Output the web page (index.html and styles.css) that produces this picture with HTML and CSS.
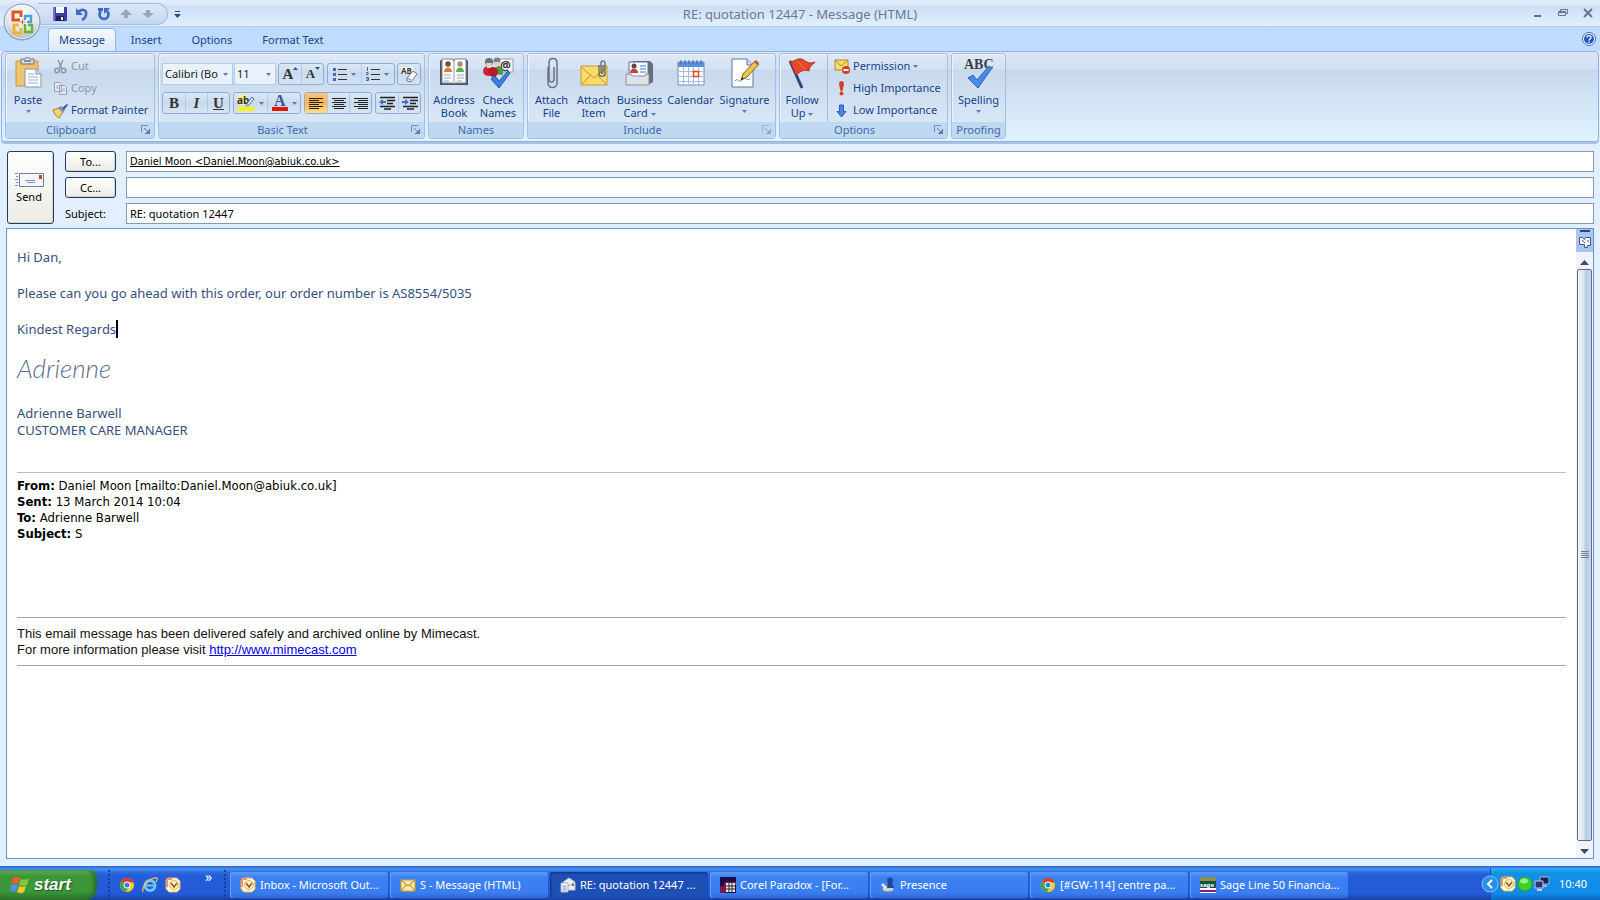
FILE: index.html
```html
<!DOCTYPE html>
<html lang="en">
<head>
  <meta charset="UTF-8">
  <title>RE: quotation 12447 - Message (HTML)</title>
  <link rel="stylesheet" href="styles.css">
</head>
<body>
  <!-- Shared icons -->
  <svg class="defs" width="0" height="0">
    <symbol id="outlook" viewBox="0 0 16 16">
      <path d="M3 1h9l3 3v8l-3 3H4l-3-3V3z" fill="#fff6df" stroke="#f0b765"/>
      <path d="M1 1h6v2H3v7H1z" fill="#ef9560"/>
      <circle cx="9" cy="8" r="4.500" fill="#ffeebc" stroke="#e5b357"/>
      <path d="M6 6l3 4 3-4" fill="none" stroke="#8a5a1c" stroke-width="1.400"/>
    </symbol>
    <symbol id="chrome" viewBox="0 0 16 16">
      <circle cx="8" cy="8" r="7" fill="#f7cf2f"/>
      <path d="M8 8L2 4.400A7 7 0 0 1 14.600 5.500H8z" fill="#dc3a2b"/>
      <path d="M8 8L2 4.400A7 7 0 0 0 7 15l3-5z" fill="#3fa64b"/>
      <circle cx="8" cy="8" r="3.400" fill="#fff"/>
      <circle cx="8" cy="8" r="2.500" fill="#3c7bd8"/>
    </symbol>
    <symbol id="launcher" viewBox="0 0 9 9">
      <path d="M.5 7V.5H7" fill="none" stroke="#6b8fc0"/>
      <path d="M3 3l4 4M8.500 4v4.500H4" fill="none" stroke="#5578ad"/>
      <path d="M5 8h3V5z" fill="#5578ad"/>
    </symbol>
    <symbol id="drop" viewBox="0 0 5 3">
      <path d="M0 0h5L2.500 3z" fill="#5a7bb0"/>
    </symbol>
  </svg>

  <div class="window">
    <header class="titlebar">
      <div class="quickAccess">
        <div class="pill">
          <button aria-label="Save"><svg width="14" height="14" viewBox="0 0 14 14"><path d="M0 0h14v14H1l-1-1z" fill="#3b3fa5"/><path d="M3 0h8v6H3z" fill="#f4f7ff"/><path d="M3 9h8v5H3z" fill="#20205c"/><path d="M8 10h2v3H8z" fill="#fff"/><path d="M0 0h2v13H0z" fill="#6d74d4"/></svg></button>
          <button aria-label="Undo"><svg width="14" height="14" viewBox="0 0 14 14"><path d="M3 5c5-4 9-2 8 3-.5 2-2 4-4 5" fill="none" stroke="#4469c0" stroke-width="2.600"/><path d="M1 1v7h7z" fill="#4469c0"/></svg></button>
          <button aria-label="Repeat"><svg width="14" height="14" viewBox="0 0 14 14"><path d="M10 4c3 3 1 8-3 8S1 7 4 4" fill="none" stroke="#3d6ac6" stroke-width="2.600"/><path d="M7 1h6L7 7zM1 1h5v3H1z" fill="#3d6ac6"/></svg></button>
          <button aria-label="Previous item"><svg width="12" height="10" viewBox="0 0 12 10"><path d="M6 0l6 6H8v3H4V6H0z" fill="#98a6bd"/></svg></button>
          <button aria-label="Next item"><svg width="12" height="10" viewBox="0 0 12 10"><path d="M6 9l6-5H8V1H4v3H0z" fill="#98a6bd"/></svg></button>
        </div>
        <button class="customize" aria-label="Customize toolbar"><svg width="7" height="7" viewBox="0 0 7 7"><path d="M1 0h5v1H1zM0 3h7L3.500 7z" fill="#2b4a86"/></svg></button>
      </div>
      <h1 class="title">RE: quotation 12447 - Message (HTML)</h1>
      <div class="windowButtons">
        <button aria-label="Minimize"><svg width="10" height="10" viewBox="0 0 10 10"><path d="M1 7h7v2H1z" fill="#5f6f8a"/></svg></button>
        <button aria-label="Restore"><svg width="10" height="10" viewBox="0 0 10 10"><path d="M2.500 3V1.500h7v4H8M.5 3.500h7v4h-7zM.5 4.500h7" fill="none" stroke="#66758f"/></svg></button>
        <button aria-label="Close"><svg width="10" height="10" viewBox="0 0 10 10"><path d="M1 1l8 8M9 1L1 9" stroke="#66758f" stroke-width="2"/></svg></button>
      </div>
      <button class="orb" aria-label="Office Button">
        <svg width="40" height="40" viewBox="0 0 40 40">
          <defs><radialGradient id="orbFill" cx=".5" cy=".3" r=".7"><stop offset="0" stop-color="#fff"/><stop offset=".6" stop-color="#e3e7ef"/><stop offset="1" stop-color="#a7b2c6"/></radialGradient></defs>
          <circle cx="20" cy="20" r="18" fill="url(#orbFill)" stroke="#8795b0"/>
          <circle cx="20" cy="20" r="16.500" fill="none" stroke="#fff" opacity=".7"/>
          <g fill="none" stroke-width="3">
            <path d="M18 18h-7V10h8v5" stroke="#e1521e"/>
            <path d="M23 18v-4h6v6h-4" stroke="#4aa0dc" stroke-width="2.400"/>
            <path d="M17 23h-5v8h7v-5" stroke="#f1b52a"/>
            <path d="M23 22v8h7v-7h-4" stroke="#67b32e" stroke-width="2.400"/>
          </g>
          <path d="M18 20h5M20.500 17.500v5" stroke="#d9682c"/>
        </svg>
      </button>
    </header>

    <nav class="tabs">
      <button class="tab active">Message</button>
      <button class="tab">Insert</button>
      <button class="tab">Options</button>
      <button class="tab">Format Text</button>
      <button class="help" aria-label="Help"><svg width="14" height="14" viewBox="0 0 14 14"><circle cx="7" cy="7" r="6.500" fill="#fff" stroke="#3a68b5"/><circle cx="7" cy="7" r="5" fill="#2456bd"/><path d="M5 5.500c0-2.500 4-2.500 4 0C9 7 7 7 7 8.500M7 9.500V11" fill="none" stroke="#fff" stroke-width="1.400"/></svg></button>
    </nav>

    <div class="ribbon">
      <section class="group clipboard">
        <div class="tools">
          <button class="big">
            <svg width="30" height="32" viewBox="0 0 30 32"><path d="M3 4h22v25H3z" fill="#efc46c" stroke="#c8973f"/><path d="M8 2h4c0-2 5-2 5 0h4v5H8z" fill="#d5d8de" stroke="#6f7580"/><path d="M11 4h7" stroke="#444"/><path d="M12 12h11l5 5v13H12z" fill="#f8fbff" stroke="#8795b5"/><path d="M23 12v5h5" fill="#cfdcf1" stroke="#8795b5"/><path d="M15 17h6M15 20h10M15 23h10M15 26h10" stroke="#9eb0cf"/></svg>
            <span>Paste</span><svg class="drop" width="5" height="3"><use href="#drop"/></svg>
          </button>
          <div class="stack">
            <button class="small off"><svg width="15" height="15" viewBox="0 0 15 15"><path d="M5 1l4 9M10 1L6 10" stroke="#8d97a8" stroke-width="1.500"/><circle cx="4" cy="11.500" r="2.300" fill="none" stroke="#8d97a8" stroke-width="1.500"/><circle cx="10.500" cy="11.500" r="2.300" fill="none" stroke="#8d97a8" stroke-width="1.500"/></svg>Cut</button>
            <button class="small off"><svg width="15" height="15" viewBox="0 0 15 15"><path d="M1.500 1.500h5l2 2v7h-7zM6.500 4.500h5l2 2v7h-7z" fill="#e5eaf2" stroke="#95a0b4"/><path d="M3 5h3M3 7h3M8 8h4M8 10h4" stroke="#a5afc0"/></svg>Copy</button>
            <button class="small"><svg width="15" height="15" viewBox="0 0 15 15"><path d="M0 7l6-2 4 4-4 6c-2-1-5-4-6-8z" fill="#f1d273" stroke="#a8822f"/><path d="M5 5l3-2 4 4-2 3z" fill="#8b8fa0"/><path d="M9 5l5-4 1 1-4 5z" fill="#3c56a5"/></svg>Format Painter</button>
          </div>
        </div>
        <h2 class="launch-pad">Clipboard<svg width="9" height="9"><use href="#launcher"/></svg></h2>
      </section>

      <section class="group basic">
        <div class="tools rows">
          <div class="row">
            <span class="selects">
              <span class="pick font"><select aria-label="Font"><option>Calibri (Bo</option></select><svg width="5" height="3"><use href="#drop"/></svg></span>
              <span class="pick size"><select aria-label="Font size"><option>11</option></select><svg width="5" height="3"><use href="#drop"/></svg></span>
            </span>
            <span class="set"><button class="letter grow">A<svg width="5" height="3" viewBox="0 0 5 3"><path d="M0 3h5L2.500 0z" fill="#2d4f91"/></svg></button><button class="letter shrink">A<svg width="5" height="3" viewBox="0 0 5 3"><path d="M0 0h5L2.500 3z" fill="#2d4f91"/></svg></button></span>
            <span class="set">
              <button class="wide" aria-label="Bullets"><svg width="14" height="14" viewBox="0 0 14 14"><path d="M0 1h3v3H0zM0 6h3v3H0zM0 11h3v3H0z" fill="#4566a8"/><path d="M5 2.500h9M5 7.500h9M5 12.500h9" stroke="#333"/></svg><svg width="5" height="3"><use href="#drop"/></svg></button>
              <button class="wide" aria-label="Numbering"><svg width="14" height="14" viewBox="0 0 14 14"><path d="M1.500 0v4M0 5.500h2v2H0M0 10.500h2.500v3H0M0 12h2" fill="none" stroke="#4566a8"/><path d="M5 2.500h9M5 7.500h9M5 12.500h9" stroke="#333"/></svg><svg width="5" height="3"><use href="#drop"/></svg></button>
            </span>
            <span class="set"><button aria-label="Clear formatting"><svg width="18" height="17" viewBox="0 0 18 17"><path d="M1 1h12v7H1z" fill="#fff"/><text x="1" y="8" font-size="8" font-weight="bold" fill="#333">AB</text><path d="M7 12l6-7 4 3-6 8-4-1z" fill="#f5f7fb" stroke="#6b7990"/><path d="M7 12l4 2" stroke="#6b7990"/></svg></button></span>
          </div>
          <div class="row">
            <span class="set"><button class="letter"><b>B</b></button><button class="letter"><i>I</i></button><button class="letter"><u>U</u></button></span>
            <span class="set">
              <button class="wide" aria-label="Highlight"><svg width="18" height="17" viewBox="0 0 18 17"><path d="M1 0h9v10H1z" fill="#f7f188"/><text x="0" y="9" font-size="10" font-weight="bold" fill="#333">ab</text><path d="M9 10l6-8 2 2-6 7z" fill="#dfe7f5" stroke="#596fa0"/><path d="M1 12h16v4H1z" fill="#fbf500"/></svg><svg width="5" height="3"><use href="#drop"/></svg></button>
              <button class="wide" aria-label="Font colour"><svg class="serif" width="16" height="17" viewBox="0 0 16 17"><text x="2" y="11" font-size="16" font-weight="bold" fill="#31559b">A</text><path d="M0 12h16v4H0z" fill="#e3120b"/></svg><svg width="5" height="3"><use href="#drop"/></svg></button>
            </span>
            <span class="set">
              <button class="on" aria-label="Align left"><svg width="14" height="13" viewBox="0 0 14 13"><path d="M0 1.500h14M0 3.500h10M0 5.500h14M0 7.500h10M0 9.500h14M0 11.500h10" stroke="#222"/></svg></button>
              <button aria-label="Centre"><svg width="14" height="13" viewBox="0 0 14 13"><path d="M0 1.500h14M2 3.500h10M0 5.500h14M2 7.500h10M0 9.500h14M2 11.500h10" stroke="#222"/></svg></button>
              <button aria-label="Align right"><svg width="14" height="13" viewBox="0 0 14 13"><path d="M0 1.500h14M4 3.500h10M0 5.500h14M4 7.500h10M0 9.500h14M4 11.500h10" stroke="#222"/></svg></button>
            </span>
            <span class="set">
              <button aria-label="Decrease indent"><svg width="16" height="14" viewBox="0 0 16 14"><path d="M1 1.500h15M8 4.500h8M8 7.500h6M1 10.500h15M5 13h7" stroke="#222" stroke-width="1.600"/><path d="M0 6l4-3v2h3v2H4v2z" fill="#3f72cc"/></svg></button>
              <button aria-label="Increase indent"><svg width="16" height="14" viewBox="0 0 16 14"><path d="M1 1.500h15M8 4.500h8M8 7.500h6M1 10.500h15M5 13h7" stroke="#222" stroke-width="1.600"/><path d="M7 6L3 3v2H0v2h3v2z" fill="#3f72cc"/></svg></button>
            </span>
          </div>
        </div>
        <h2 class="launch-pad">Basic Text<svg width="9" height="9"><use href="#launcher"/></svg></h2>
      </section>

      <section class="group names">
        <div class="tools">
          <button class="big">
            <svg width="30" height="32" viewBox="0 0 30 32"><path d="M1 4l2-2h24l2 2v24H1z" fill="#4c5564"/><path d="M3 2h11l1 2 1-2h11v24H16l-1 1-1-1H3z" fill="#fdfdfd" stroke="#7d8797"/><path d="M15 3v23" stroke="#8d97a8"/><circle cx="9" cy="7" r="2.700" fill="#6d4c41"/><path d="M5 15c0-6 8-6 8 0z" fill="#e8762c"/><circle cx="21" cy="7" r="2.700" fill="#b88a5c"/><path d="M17 15c0-6 8-6 8 0z" fill="#62ad4b"/><path d="M5 18h7M5 21h7M5 24h5M18 18h7M18 21h7M18 24h5" stroke="#9aa6ba"/></svg>
            <span>Address<br>Book</span>
          </button>
          <button class="big">
            <svg width="32" height="32" viewBox="0 0 32 32"><path d="M17 2h14v13H17z" fill="#fff" stroke="#8f99aa"/><text x="18" y="13" font-size="12" font-weight="bold" fill="#333">@</text><circle cx="7" cy="5" r="4" fill="#6c7078"/><circle cx="15" cy="4" r="3.500" fill="#7b808a"/><path d="M12 17c0-11 9-9 9-2v3z" fill="#4a9d47"/><circle cx="6" cy="14" r="5" fill="#cc2730"/><circle cx="11" cy="15" r="5" fill="#b51d28"/><path d="M4 6h6l-1 5H5zM12 5h6l-1 4h-4z" fill="#e5d3c6"/><path d="M9 22l4-3 4 5L26 14l2 2-11 15z" fill="#3d7fe0" stroke="#2158ae"/></svg>
            <span>Check<br>Names</span>
          </button>
        </div>
        <h2>Names</h2>
      </section>

      <section class="group include">
        <div class="tools">
          <button class="big w42">
            <svg width="14" height="32" viewBox="0 0 14 32"><path d="M3 10v16c0 6 9 6 9 0V6c0-6-8-6-8 0v16c0 4 5 4 5 0V10" fill="none" stroke="#6b7280" stroke-width="1.500"/></svg>
            <span>Attach<br>File</span>
          </button>
          <button class="big w42">
            <svg width="28" height="32" viewBox="0 0 28 32"><path d="M1 9h26v19H1z" fill="#fbdc69" stroke="#c89b31"/><path d="M1 10l13 11 13-11M1 28l10-10M27 28L17 18" fill="none" stroke="#bf932f"/><path d="M19 8v9c0 3 6 3 6 0V6c0-3-4-3-4 0v9c0 2 2 2 2 0V8" fill="none" stroke="#505a6a" stroke-width="1.200"/></svg>
            <span>Attach<br>Item</span>
          </button>
          <button class="big w50">
            <svg width="30" height="32" viewBox="0 0 30 32"><path d="M5 4h20l3 3v18l-5 3V8z" fill="#636e80"/><path d="M4 5h19v15H4z" fill="#f8fbff" stroke="#60708c"/><circle cx="9" cy="9" r="2.500" fill="#5c4741"/><path d="M5 16c0-6 8-6 8 0z" fill="#b9473e"/><path d="M15 9h6M15 12h6M15 15h6" stroke="#4979ca"/><path d="M1 17h5l1 2h13l1-2h3v11H1z" fill="#dfe1e6" stroke="#8b909b"/></svg>
            <span>Business<br>Card <svg width="5" height="3"><use href="#drop"/></svg></span>
          </button>
          <button class="big w52">
            <svg width="28" height="32" viewBox="0 0 28 32"><path d="M1 5h26v23H1z" fill="#fff" stroke="#7790b8"/><path d="M1 5h26v5H1z" fill="#5d8ddd"/><path d="M4 3v4M8 3v4M12 3v4M16 3v4M20 3v4M24 3v4" stroke="#3c5f9f"/><path d="M1 14.500h26M1 19.500h26M1 24.500h26M6.500 10v18M11.500 10v18M16.500 10v18M21.500 10v18" stroke="#a6bce0"/><path d="M16.500 14.500h5v5h-5z" fill="#fff" stroke="#e04325" stroke-width="1.500"/></svg>
            <span>Calendar</span>
          </button>
          <button class="big w56">
            <svg width="30" height="32" viewBox="0 0 30 32"><path d="M2 2h15l6 6v22H2z" fill="#fdfeff" stroke="#68768f"/><path d="M17 2v6h6" fill="#cbd8ed" stroke="#68768f"/><path d="M5 24c3-4 4 3 7-1s4 1 8-1" fill="none" stroke="#8090aa"/><path d="M11 23l2-6L25 4l4 3-12 13z" fill="#f0c34d" stroke="#7d6227"/><path d="M24 5l2-2 3 3-2 2z" fill="#c75248"/><path d="M11 23l1-3 2 2z" fill="#333"/></svg>
            <span>Signature</span><svg class="drop" width="5" height="3"><use href="#drop"/></svg>
          </button>
        </div>
        <h2 class="launch-pad">Include<svg class="faint" width="9" height="9"><use href="#launcher"/></svg></h2>
      </section>

      <section class="group options">
        <div class="tools">
          <button class="big">
            <svg width="30" height="32" viewBox="0 0 30 32"><path d="M3 4l12 27" stroke="#2f457d" stroke-width="3"/><path d="M3 4c4 2 6-3 11-2s6 6 14 3c-2 3-6 4-6 9-5-2-8 0-13 4z" fill="#e2482b" stroke="#b42f1d"/><path d="M10 4c3 1 4 5 8 9" fill="none" stroke="#f48462"/></svg>
            <span>Follow<br>Up <svg width="5" height="3"><use href="#drop"/></svg></span>
          </button>
          <div class="stack lined">
            <button class="small"><svg width="16" height="15" viewBox="0 0 16 15"><path d="M1 1h13v10H1z" fill="#fbdc69" stroke="#a98634"/><path d="M1 1l6 6 7-6" fill="none" stroke="#a98634"/><circle cx="12" cy="11" r="4" fill="#d63a26"/><path d="M9.500 11h5" stroke="#fff" stroke-width="2"/></svg>Permission <svg width="5" height="3"><use href="#drop"/></svg></button>
            <button class="small"><svg width="16" height="15" viewBox="0 0 16 15"><path d="M5 3c0-4 5-4 5 0L8.500 10h-2z" fill="#dd3b22"/><circle cx="7.500" cy="12.500" r="2" fill="#dd3b22"/></svg>High Importance</button>
            <button class="small"><svg width="16" height="15" viewBox="0 0 16 15"><path d="M5.500 2h4v6.500H12L7.500 14 3 8.500h2.500z" fill="#4c83e0" stroke="#2d5cb4"/></svg>Low Importance</button>
          </div>
        </div>
        <h2 class="launch-pad">Options<svg width="9" height="9"><use href="#launcher"/></svg></h2>
      </section>

      <section class="group proofing">
        <div class="tools">
          <button class="big">
            <svg class="serif" width="32" height="32" viewBox="0 0 32 32"><text x="1" y="12" font-size="14" font-weight="bold" fill="#3b3f48">ABC</text><path d="M5 21l5-3 4 5L26 9l3 2-14 20z" fill="#4b8ae6" stroke="#2c62b8"/></svg>
            <span>Spelling</span><svg class="drop" width="5" height="3"><use href="#drop"/></svg>
          </button>
        </div>
        <h2>Proofing</h2>
      </section>
    </div>

    <form class="envelope">
      <button type="button" class="send">
        <svg width="30" height="16" viewBox="0 0 30 16"><path d="M5.500 1.500h24v13h-24z" fill="#f6f8fd" stroke="#6c7f9f"/><path d="M25 3h3v4h-3z" fill="#d0452e"/><path d="M11 8.500h10M13 10.500h8" stroke="#7d92bb"/><path d="M1 1.500h3M2 4.500h2M1 7.500h3M2 10.500h2M1 13.500h3" stroke="#7d92bb"/></svg>
        Send
      </button>
      <div class="fields">
        <button type="button" id="toLabel">To...</button>
        <input class="recipient" type="text" aria-labelledby="toLabel" value="Daniel Moon &lt;Daniel.Moon@abiuk.co.uk&gt;">
        <button type="button" id="ccLabel">Cc...</button>
        <input type="text" aria-labelledby="ccLabel">
        <label for="subject">Subject:</label>
        <input id="subject" type="text" value="RE: quotation 12447">
      </div>
    </form>

    <main class="editor">
      <article class="message">
        <div class="reply">
          <p>Hi Dan,</p>
          <p>Please can you go ahead with this order, our order number is AS8554/5035</p>
          <p>Kindest Regards<span class="caret"></span></p>
          <p class="script">Adrienne</p>
          <p>Adrienne Barwell<br>CUSTOMER CARE MANAGER</p>
        </div>
        <div class="quoted">
          <b>From:</b> Daniel Moon [mailto:Daniel.Moon@abiuk.co.uk]<br>
          <b>Sent:</b> 13 March 2014 10:04<br>
          <b>To:</b> Adrienne Barwell<br>
          <b>Subject:</b> S
        </div>
        <div class="footer">
          This email message has been delivered safely and archived online by Mimecast.<br>
          For more information please visit <a href="http://www.mimecast.com">http://www.mimecast.com</a>
        </div>
      </article>
      <div class="scrollbar">
        <button class="browse" aria-label="Select browse object"><svg width="14" height="20" viewBox="0 0 14 20"><path d="M2 1h10v2H2z" fill="#33456d"/><path d="M1.500 8.500h3l2 2 1-2h5v8h-3v2h-3v-3h-5z" fill="#f4f6fa" stroke="#4c5a7b"/><path d="M4 11l3 3M9 12h2" stroke="#4c5a7b"/></svg></button>
        <button class="arrow" aria-label="Scroll up"><svg width="9" height="5" viewBox="0 0 9 5"><path d="M0 5h9L4.500 0z" fill="#3f4a66"/></svg></button>
        <div class="thumb"><svg width="8" height="8" viewBox="0 0 8 8"><path d="M0 .5h8M0 2.500h8M0 4.500h8M0 6.500h8" stroke="#76829c"/></svg></div>
        <button class="arrow" aria-label="Scroll down"><svg width="9" height="5" viewBox="0 0 9 5"><path d="M0 0h9L4.500 5z" fill="#3f4a66"/></svg></button>
      </div>
    </main>
  </div>

  <footer class="taskbar">
    <button class="start"><svg width="20" height="20" viewBox="0 0 20 20"><path d="M3 3c3-2 5-1 7 0L8 9C6 8 4 8 1 9z" fill="#ee5a24"/><path d="M11 4c2 1 5 1 8-1l-2 7c-3 1-5 1-8 0z" fill="#87c540"/><path d="M1 10c3-1 5-1 7 0l-2 7c-2-1-4-1-6 0z" fill="#4f8ff0"/><path d="M9 11c2 1 4 1 7 0l-2 6c-3 2-5 1-7 0z" fill="#fbc62c"/></svg>start</button>
    <div class="launch">
      <svg width="16" height="16"><use href="#chrome"/></svg>
      <svg width="16" height="16" viewBox="0 0 16 16"><circle cx="8" cy="8.500" r="5" fill="none" stroke="#71c3f8" stroke-width="3"/><path d="M4 8.500h9" stroke="#71c3f8" stroke-width="2"/><path d="M1 15C-1 9 9 0 15 1c1 1 0 2-1 4" fill="none" stroke="#f2c84a" stroke-width="1.200"/></svg>
      <svg width="16" height="16"><use href="#outlook"/></svg>
      <span class="more">»</span>
    </div>
    <div class="tasks">
      <button><svg width="16" height="16"><use href="#outlook"/></svg>Inbox - Microsoft Out...</button>
      <button><svg width="16" height="16" viewBox="0 0 16 16"><path d="M1 3h14v11H1z" fill="#fde9a0" stroke="#d6a336"/><path d="M1 3l7 6 7-6M1 14l5-6M15 14l-5-6" fill="none" stroke="#a87a22"/></svg>S - Message (HTML)</button>
      <button class="current"><svg width="16" height="16" viewBox="0 0 16 16"><path d="M3 5l6-4 6 4v8H3z" fill="#e9eef7" stroke="#b7c3d8"/><path d="M3 5l6 4 6-4" fill="none" stroke="#93a3c0"/><path d="M1 6h7v9H1z" fill="#fff" stroke="#9fb0cc"/><path d="M2.500 9h4M2.500 11h4M2.500 13h4" stroke="#6b84b3"/><path d="M12 7h2v2h-2z" fill="#d64a32"/></svg>RE: quotation 12447 ...</button>
      <button><svg width="16" height="16" viewBox="0 0 16 16"><path d="M0 0h16v16H0z" fill="#1c0b4a"/><path d="M0 16V9h4V5h12v3H6v8z" fill="#7d1747"/><path d="M6 6h9v9H6z" fill="#eee"/><path d="M6 9h9M6 12h9M9 6v9M12 6v9" stroke="#222"/></svg>Corel Paradox - [For...</button>
      <button><svg width="16" height="16" viewBox="0 0 16 16"><ellipse cx="8" cy="12" rx="6" ry="3" fill="#c8d0dc" stroke="#6f7c92"/><circle cx="10" cy="3.500" r="3" fill="#1d4a94"/><path d="M8 6h4l2 5H7z" fill="#1d4a94"/><path d="M2 7l4 4" stroke="#dce3ee" stroke-width="3"/></svg>Presence</button>
      <button><svg width="16" height="16"><use href="#chrome"/></svg>[#GW-114] centre pa...</button>
      <button><svg width="16" height="16" viewBox="0 0 16 16"><path d="M0 0h16v16H0z" fill="#fff"/><path d="M0 0h16v4H0z" fill="#8b9148"/><path d="M0 4h16v7H0z" fill="#0f5142"/><text x="0" y="10" font-size="6" font-weight="bold" fill="#fff">sage</text><path d="M0 13h16v2H0z" fill="#8b1790"/></svg>Sage Line 50 Financia...</button>
    </div>
    <div class="tray">
      <button class="hide" aria-label="Hide icons"><svg width="18" height="18" viewBox="0 0 18 18"><circle cx="9" cy="9" r="8" fill="#2a8fea" stroke="#7cc4fb"/><path d="M11 5L7 9l4 4" fill="none" stroke="#fff" stroke-width="2"/></svg></button>
      <svg width="16" height="16"><use href="#outlook"/></svg>
      <svg width="16" height="16" viewBox="0 0 16 16"><circle cx="8" cy="8" r="7" fill="#3ecf2c" stroke="#28a51f"/><ellipse cx="7" cy="5" rx="4" ry="2.500" fill="#9bf086"/></svg>
      <svg width="16" height="16" viewBox="0 0 16 16"><path d="M6 1h9v7H6z" fill="#1d2455" stroke="#aab4d6"/><path d="M9 9h4v2H9z" fill="#aab4d6"/><path d="M1 5h8v7H1z" fill="#2a3576" stroke="#c5cdea"/><path d="M3 13h5v2H3z" fill="#c5cdea"/></svg>
      <time>10:40</time>
    </div>
  </footer>
</body>
</html>
```
FILE: styles.css
```css
* {
  box-sizing: border-box;
}
body {
  margin: 0;
  height: 100vh;
  display: flex;
  flex-direction: column;
  background: #e3efff;
  font: 11px/14px "Noto Sans", sans-serif;
  color: #15428b;
}
button, input, select {
  font: inherit;
  color: inherit;
}
button {
  padding: 0;
  border: 0;
  background: none;
}
h1, h2, p {
  margin: 0;
  font-size: 11px;
  font-weight: normal;
}
svg {
  flex: none;
  overflow: visible;
}
.defs {
  position: absolute;
}
.serif {
  font-family: "Liberation Serif", serif;
}
.window {
  flex: 1;
  min-height: 0;
  display: flex;
  flex-direction: column;
}

/* Title bar */
.titlebar {
  position: relative;
  height: 27px;
  padding-top: 1px;
  display: grid;
  grid-template-columns: 1fr auto 1fr;
  align-items: center;
  border-bottom: 1px solid #b1cdf0;
  background: linear-gradient(#e3edfb 0, #dbe8fa 5px, #cbdff8 6px, #e4effd 100%);
}
.quickAccess {
  display: flex;
  align-items: center;
  gap: 6px;
  padding-left: 38px;
}
.pill {
  display: flex;
  height: 22px;
  padding: 0 8px 0 11px;
  border: 1px solid #a3bfe4;
  border-left: 0;
  border-radius: 0 11px 11px 0;
  background: linear-gradient(#dde8f8, #c4d7f1);
}
.pill button {
  width: 22px;
  display: flex;
  align-items: center;
  justify-content: center;
}
.title {
  font-size: 13px;
  color: #6a7890;
}
.windowButtons {
  display: flex;
  justify-content: flex-end;
  gap: 15px;
  padding-right: 7px;
}
.orb {
  position: absolute;
  left: 2px;
  top: 2px;
  z-index: 1;
}

/* Tabs */
.tabs {
  height: 24px;
  display: flex;
  align-items: flex-end;
  padding: 0 4px 0 48px;
  background: #bfdbff;
}
.tab {
  height: 23px;
  padding: 0 15px;
}
.tab.active {
  padding: 0 10px;
  border: 1px solid #8fb4e3;
  border-bottom: 0;
  border-radius: 4px 4px 0 0;
  background: linear-gradient(#f4f9ff, #dde9f7);
}
.help {
  margin-left: auto;
  height: 22px;
}

/* Ribbon */
.ribbon {
  display: flex;
  gap: 3px;
  margin: 0 1px;
  padding: 1px 3px 2px;
  border: 1px solid #8db2e3;
  border-radius: 4px;
  background: linear-gradient(#dbe6f4 0, #d3e0f1 17px, #c7d8ed 18px, #e1f3ff 100%);
  box-shadow: 0 2px 0 #a9c2e2;
}
.group {
  height: 86px;
  display: flex;
  flex-direction: column;
  border: 1px solid #a3c0e2;
  border-radius: 3px;
  background: linear-gradient(#dfe9f6 0, #d3e1f2 15px, #c8d9ee 16px, #dcebf8 100%);
  box-shadow: inset 1px 1px 0 #eaf2fc;
}
.group h2 {
  height: 16px;
  display: flex;
  align-items: center;
  justify-content: center;
  position: relative;
  background: #c1d8f1;
  color: #3e6aaa;
}
.group .launch-pad {
  padding-right: 18px;
}
.group h2 svg {
  position: absolute;
  right: 4px;
  top: 3px;
}
.faint {
  opacity: 0.5;
}
.tools {
  flex: 1;
  display: flex;
  justify-content: center;
}
.big {
  width: 44px;
  padding-top: 3px;
  display: flex;
  flex-direction: column;
  align-items: center;
  line-height: 13px;
}
.big > span {
  margin-top: 4px;
  white-space: nowrap;
}
.big span svg {
  vertical-align: middle;
}
.drop {
  margin-top: 4px;
}
.w42 {
  width: 42px;
}
.w50 {
  width: 50px;
}
.w52 {
  width: 52px;
}
.w56 {
  width: 56px;
}
.stack {
  display: flex;
  flex-direction: column;
  margin-left: 3px;
  padding-top: 1px;
}
.small {
  height: 22px;
  display: flex;
  align-items: center;
  gap: 3px;
  white-space: nowrap;
}
.off {
  color: #8d97a8;
}
.lined {
  padding-left: 6px;
  border-left: 1px solid #a3bfe0;
}
.clipboard {
  width: 150px;
}
.basic {
  width: 267px;
}
.names {
  width: 96px;
}
.include {
  width: 249px;
}
.options {
  width: 169px;
}
.clipboard .tools, .options .tools {
  justify-content: flex-start;
}
.proofing {
  width: 55px;
}

/* Basic text controls */
.rows {
  flex-direction: column;
  justify-content: flex-start;
  gap: 7px;
  padding: 9px 3px 0;
}
.row {
  display: flex;
  justify-content: space-between;
}
.selects {
  display: flex;
  gap: 1px;
}
.pick {
  position: relative;
  height: 22px;
  background: #eaf2fb;
  border: 1px solid #b5cbe8;
}
.pick select {
  width: 100%;
  height: 20px;
  padding: 0 2px;
  appearance: none;
  border: 0;
  background: none;
  color: #222;
}
.pick svg {
  position: absolute;
  right: 4px;
  top: 9px;
}
.font {
  width: 71px;
}
.size {
  width: 42px;
}
.set {
  height: 22px;
  display: flex;
  border: 1px solid #8fadd4;
  border-radius: 3px;
  background: linear-gradient(#dbe7f5, #c9daee 50%, #d6e5f5);
}
.set button {
  width: 22px;
  display: flex;
  align-items: center;
  justify-content: center;
}
.set button + button {
  border-left: 1px solid #b4cbe6;
}
.set .wide {
  width: 33px;
  gap: 4px;
}
.set .on {
  background: linear-gradient(#f8c37a, #ffb64e 50%, #ffe08a);
}
.set .letter {
  font-family: "Liberation Serif", serif;
  font-size: 15px;
  font-weight: bold;
  color: #333;
}
.letter svg {
  align-self: flex-start;
  margin-top: 3px;
}
.set .shrink {
  font-size: 13px;
}

/* Address fields */
.envelope {
  display: flex;
  gap: 11px;
  padding: 9px 6px 4px 7px;
  color: #000;
}
.send, .fields button {
  border: 1px solid #1d3f66;
  border-radius: 3px;
  background: linear-gradient(#fff, #ecebe4);
  box-shadow: inset -1px -1px 0 #d5d2c6;
}
.send {
  width: 47px;
  height: 73px;
  padding-right: 3px;
  display: flex;
  flex-direction: column;
  align-items: center;
  justify-content: center;
  gap: 2px;
}
.fields {
  flex: 1;
  display: grid;
  grid-template-columns: 51px 1fr;
  column-gap: 10px;
  row-gap: 5px;
  align-content: start;
  align-items: center;
}
.fields button {
  height: 21px;
}
.fields input {
  width: 100%;
  height: 21px;
  padding: 0 3px;
  border: 1px solid #7f9db9;
  background: #fff;
}
.fields .recipient {
  font-family: "DejaVu Sans Condensed", "Noto Sans", sans-serif;
  text-decoration: underline;
}

/* Message body */
.editor {
  flex: 1;
  min-height: 0;
  display: flex;
  margin: 0 6px 7px;
  border: 1px solid #6593cf;
  background: #fff;
}
.message {
  flex: 1;
  padding: 19px 10px 0;
}
.reply {
  padding-bottom: 33px;
  border-bottom: 1px solid #b5bdd0;
  color: #34507f;
}
.reply p {
  margin-bottom: 18px;
  font-size: 13px;
  line-height: 18px;
}
.reply p:last-child {
  margin: 0;
  line-height: 17px;
}
.caret {
  display: inline-block;
  width: 2px;
  height: 18px;
  vertical-align: top;
  background: #000;
}
.reply .script {
  margin-bottom: 25px;
  font: italic 300 26px/24px Lato, cursive;
  color: #5a6f94;
}
.quoted {
  padding-top: 5px;
  font: 13px/16px "DejaVu Sans Condensed", "Noto Sans", sans-serif;
  color: #000;
}
.footer {
  margin-top: 75px;
  padding: 8px 0 7px;
  border-top: 1px solid #a9a695;
  border-bottom: 1px solid #a9a695;
  font: 13px/16px "Liberation Sans", sans-serif;
  color: #111;
}
.footer a {
  color: #0000ee;
}
.scrollbar {
  width: 17px;
  display: flex;
  flex-direction: column;
  background: #f2f3f6;
}
.browse {
  height: 23px;
  background: #a9c6f2;
}
.arrow {
  height: 17px;
}
.thumb {
  flex: 1;
  margin: 0 1px;
  display: flex;
  align-items: center;
  justify-content: center;
  border: 1px solid #5c6b91;
  border-radius: 2px;
  background: linear-gradient(90deg, #f4f6f9, #dce4ec 45%, #b5cade 60%, #c7d9e9);
}

/* Taskbar */
.taskbar {
  height: 34px;
  display: flex;
  background: linear-gradient(#2862cf 0, #4590ee 3px, #2e6fe0 6px, #245edb 9px, #2259d6 28px, #1941a5 100%);
  color: #fff;
}
.start {
  width: 97px;
  margin-top: 4px;
  padding-left: 10px;
  display: flex;
  align-items: center;
  gap: 4px;
  border-radius: 0 8px 12px 0;
  background: linear-gradient(#6cb866, #3c9639 20%, #3a9938 70%, #2a7329);
  box-shadow: inset -3px 0 4px #2a6b27;
  font: italic bold 17px/20px "Liberation Sans", sans-serif;
  text-shadow: 1px 1px 1px #1d4a1c;
}
.launch {
  width: 118px;
  margin: 4px 0 0 11px;
  padding-left: 9px;
  display: flex;
  align-items: center;
  gap: 7px;
  border-left: 2px dotted #163c9e;
  border-right: 2px dotted #163c9e;
}
.more {
  align-self: flex-start;
  margin-left: 17px;
  font-size: 14px;
}
.tasks {
  flex: 1;
  display: flex;
  gap: 2px;
  margin: 6px 0 2px 4px;
}
.tasks button {
  flex: 0 1 158px;
  display: flex;
  align-items: center;
  gap: 4px;
  padding-left: 10px;
  border-radius: 3px;
  background: linear-gradient(#5c9cf8, #3c81f3 20%, #3a7df0 80%, #2e68d8);
  box-shadow: inset 1px 0 0 #66a1f7;
  white-space: nowrap;
}
.tasks .current {
  background: #1d4fb5;
  box-shadow: inset 1px 1px 2px #0e3380;
}
.tray {
  width: 110px;
  margin-top: 2px;
  display: flex;
  align-items: center;
  gap: 1px;
  border-left: 1px solid #0f4fb0;
  background: linear-gradient(#2fb3f4, #1290e6 15%, #0f8aea 80%, #0c66c0);
}
.hide {
  height: 18px;
  margin-left: -10px;
}
.tray time {
  margin-left: 8px;
}
```
